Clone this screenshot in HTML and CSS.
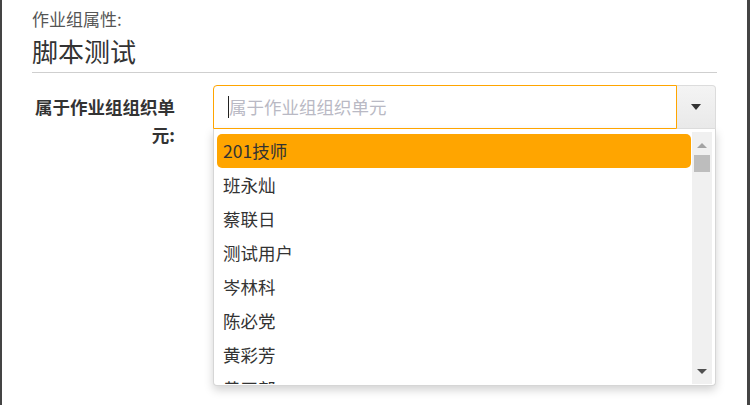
FILE: index.html
```html
<!DOCTYPE html>
<html lang="zh-CN">
<head>
<meta charset="utf-8">
<title>作业组属性</title>
<link rel="stylesheet" href="styles.css">
</head>
<body>
<div class="frame">
  <div class="subtitle">作业组属性:</div>
  <div class="title">脚本测试</div>
  <div class="rule"></div>
  <div class="row">
    <div class="label">属于作业组组织单元:</div>
    <div class="combo">
      <div class="combo-head">
        <div class="input"><span class="caret"></span><span class="placeholder">属于作业组组织单元</span></div>
        <div class="toggle"><span class="tri-down"></span></div>
      </div>
      <div class="dropdown">
        <ul class="list">
          <li class="item active">201技师</li>
          <li class="item">班永灿</li>
          <li class="item">蔡联日</li>
          <li class="item">测试用户</li>
          <li class="item">岑林科</li>
          <li class="item">陈必党</li>
          <li class="item">黄彩芳</li>
          <li class="item">黄田部</li>
        </ul>
        <div class="scrollbar">
          <span class="sb-up"></span>
          <span class="sb-thumb"></span>
          <span class="sb-spacer"></span>
          <span class="sb-down"></span>
        </div>
      </div>
    </div>
  </div>
</div>
</body>
</html>
```
FILE: styles.css
```css
html, body {
  margin: 0;
  padding: 0;
  background: #fff;
}
body {
  width: 750px;
  height: 405px;
  overflow: hidden;
  font-family: "Noto Sans CJK SC", "Open Sans", sans-serif;
  color: #333;
}
.frame {
  box-sizing: border-box;
  height: 405px;
  border-left: 2px solid #444;
  border-right: 3px solid #444;
  padding: 9px 30px 0 30px;
}
.subtitle {
  font-size: 17px;
  line-height: 20px;
  color: #555;
}
.title {
  margin-top: 5px;
  font-size: 26px;
  line-height: 34px;
  color: #333;
}
.rule {
  margin-top: 4px;
  width: 685px;
  height: 1px;
  background: #cfcfcf;
}
.row {
  margin-top: 12px;
  display: flex;
  align-items: flex-start;
  gap: 38px;
}
.label {
  width: 143px;
  flex: none;
  text-align: right;
  font-weight: bold;
  font-size: 17.5px;
  line-height: 28px;
  padding-top: 8px;
  color: #333;
}
.combo {
  width: 503px;
  flex: none;
}
.combo-head {
  display: flex;
  height: 44px;
}
.input {
  box-sizing: border-box;
  width: 464px;
  height: 44px;
  border: 1px solid #ffa500;
  border-radius: 4px 0 0 0;
  display: flex;
  align-items: center;
  padding-left: 14px;
  font-size: 17.5px;
}
.caret {
  width: 1px;
  height: 22px;
  background: #222;
}
.placeholder {
  color: #b9b9c4;
  line-height: 44px;
}
.toggle {
  box-sizing: border-box;
  width: 39px;
  height: 44px;
  border: 1px solid #dcdcdc;
  border-left: none;
  border-radius: 0 4px 0 0;
  background: linear-gradient(#f4f4f4, #e9e9e9);
  display: flex;
  align-items: center;
  justify-content: center;
}
.tri-down {
  width: 0;
  height: 0;
  border-left: 5px solid transparent;
  border-right: 5px solid transparent;
  border-top: 6px solid #333;
}
.dropdown {
  box-sizing: border-box;
  width: 503px;
  height: 257px;
  border: 1px solid #d6d6d6;
  border-top: none;
  border-radius: 0 0 4px 4px;
  padding: 3px 3px 1px 3px;
  display: flex;
  background: #fff;
  box-shadow: 0 4px 10px rgba(0, 0, 0, 0.18);
}
.list {
  list-style: none;
  margin: 0;
  padding: 2px 0 0 0;
  flex: 1;
  overflow: hidden;
}
.item {
  height: 34px;
  line-height: 34px;
  padding-left: 6px;
  margin-right: 1px;
  font-size: 17.5px;
  color: #333;
  border-radius: 5px;
  white-space: nowrap;
}
.item.active {
  background: #ffa500;
}
.scrollbar {
  width: 20px;
  flex: none;
  background: #f0f0f0;
  display: flex;
  flex-direction: column;
  align-items: center;
}
.sb-up {
  margin-top: 11px;
  width: 0;
  height: 0;
  border-left: 5px solid transparent;
  border-right: 5px solid transparent;
  border-bottom: 5px solid #a3a3a3;
}
.sb-thumb {
  margin-top: 7px;
  width: 16px;
  height: 17px;
  background: #bdbdbd;
}
.sb-spacer {
  flex: 1;
}
.sb-down {
  margin-bottom: 10px;
  width: 0;
  height: 0;
  border-left: 5px solid transparent;
  border-right: 5px solid transparent;
  border-top: 5px solid #505050;
}
```
